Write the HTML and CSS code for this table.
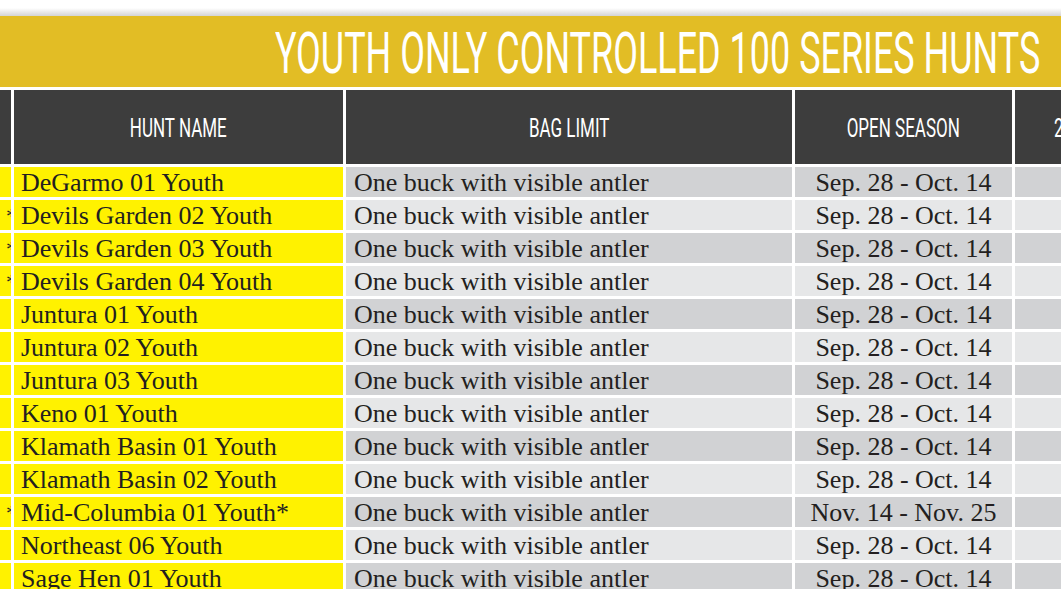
FILE: index.html
```html
<!DOCTYPE html>
<html>
<head>
<meta charset="utf-8">
<link rel="stylesheet" href="styles.css">
</head>
<body>
<div class="page">
  <div class="banner"><span class="title">YOUTH ONLY CONTROLLED 100 SERIES HUNTS</span></div>
  <div class="table">
    <div class="th"></div>
    <div class="th"><span class="label">HUNT NAME</span></div>
    <div class="th"><span class="label">BAG LIMIT</span></div>
    <div class="th"><span class="label">OPEN SEASON</span></div>
    <div class="th th-last"><span class="label">2</span></div>

    <div class="edge"></div><div class="name">DeGarmo 01 Youth</div><div class="cell dk">One buck with visible antler</div><div class="cell dk center">Sep. 28 - Oct. 14</div><div class="cell dk"></div>
    <div class="edge"><span class="star">*</span></div><div class="name">Devils Garden 02 Youth</div><div class="cell lt">One buck with visible antler</div><div class="cell lt center">Sep. 28 - Oct. 14</div><div class="cell lt"></div>
    <div class="edge"><span class="star">*</span></div><div class="name">Devils Garden 03 Youth</div><div class="cell dk">One buck with visible antler</div><div class="cell dk center">Sep. 28 - Oct. 14</div><div class="cell dk"></div>
    <div class="edge"><span class="star">*</span></div><div class="name">Devils Garden 04 Youth</div><div class="cell lt">One buck with visible antler</div><div class="cell lt center">Sep. 28 - Oct. 14</div><div class="cell lt"></div>
    <div class="edge"></div><div class="name">Juntura 01 Youth</div><div class="cell dk">One buck with visible antler</div><div class="cell dk center">Sep. 28 - Oct. 14</div><div class="cell dk"></div>
    <div class="edge"></div><div class="name">Juntura 02 Youth</div><div class="cell lt">One buck with visible antler</div><div class="cell lt center">Sep. 28 - Oct. 14</div><div class="cell lt"></div>
    <div class="edge"></div><div class="name">Juntura 03 Youth</div><div class="cell dk">One buck with visible antler</div><div class="cell dk center">Sep. 28 - Oct. 14</div><div class="cell dk"></div>
    <div class="edge"></div><div class="name">Keno 01 Youth</div><div class="cell lt">One buck with visible antler</div><div class="cell lt center">Sep. 28 - Oct. 14</div><div class="cell lt"></div>
    <div class="edge"></div><div class="name">Klamath Basin 01 Youth</div><div class="cell dk">One buck with visible antler</div><div class="cell dk center">Sep. 28 - Oct. 14</div><div class="cell dk"></div>
    <div class="edge"></div><div class="name">Klamath Basin 02 Youth</div><div class="cell lt">One buck with visible antler</div><div class="cell lt center">Sep. 28 - Oct. 14</div><div class="cell lt"></div>
    <div class="edge"><span class="star">*</span></div><div class="name">Mid-Columbia 01 Youth*</div><div class="cell dk">One buck with visible antler</div><div class="cell dk center">Nov. 14 - Nov. 25</div><div class="cell dk"></div>
    <div class="edge"></div><div class="name">Northeast 06 Youth</div><div class="cell lt">One buck with visible antler</div><div class="cell lt center">Sep. 28 - Oct. 14</div><div class="cell lt"></div>
    <div class="edge"></div><div class="name">Sage Hen 01 Youth</div><div class="cell dk">One buck with visible antler</div><div class="cell dk center">Sep. 28 - Oct. 14</div><div class="cell dk"></div>
  </div>
</div>
</body>
</html>
```
FILE: styles.css
```css
html, body {
  margin: 0;
  padding: 0;
}
body {
  width: 1061px;
  height: 589px;
  overflow: hidden;
  background: #ffffff;
}
.page {
  padding-top: 16px;
  background: linear-gradient(to bottom, #ffffff 0px, #ffffff 8px, #d4d4d4 16px, #ffffff 16px);
}
.banner {
  height: 71px;
  background: #e2bd25;
  display: flex;
  justify-content: flex-end;
  align-items: center;
  padding-right: 21px;
  overflow: hidden;
}
.title {
  display: inline-block;
  font-family: Roboto, "Liberation Sans", sans-serif;
  font-weight: 400;
  font-size: 58px;
  line-height: 1;
  color: #ffffff;
  white-space: nowrap;
  transform: scaleX(0.62);
  transform-origin: right center;
  margin-top: 3px;
}
.table {
  margin-top: 3px;
  display: grid;
  grid-template-columns: 11px 329px 446px 217px 120px;
  grid-template-rows: 74px;
  grid-auto-rows: 30px;
  gap: 3px;
  width: 1140px;
}
.th {
  background: #3d3d3d;
  display: flex;
  align-items: center;
  justify-content: center;
  overflow: hidden;
}
.th-last {
  justify-content: flex-start;
  padding-left: 39px;
}
.label {
  display: inline-block;
  font-family: Roboto, "Liberation Sans", sans-serif;
  font-size: 25px;
  font-weight: 400;
  color: #ffffff;
  white-space: nowrap;
  transform: scaleX(0.68);
  margin-top: 3px;
}
.th-last .label {
  transform-origin: left center;
}
.edge, .name, .cell {
  font-family: "Liberation Serif", serif;
  font-size: 26px;
  line-height: 28px;
  padding-top: 2px;
  color: #231f20;
  white-space: nowrap;
  overflow: hidden;
}
.edge {
  background: #fff200;
  display: flex;
  justify-content: flex-end;
}
.star {
  margin-right: -6px;
  font-size: 22px;
}
.name {
  background: #fff200;
  padding-left: 7px;
}
.cell {
  padding-left: 8px;
}
.center {
  text-align: center;
  padding-left: 0;
}
.dk {
  background: #d1d2d4;
}
.lt {
  background: #e6e7e8;
}
```
